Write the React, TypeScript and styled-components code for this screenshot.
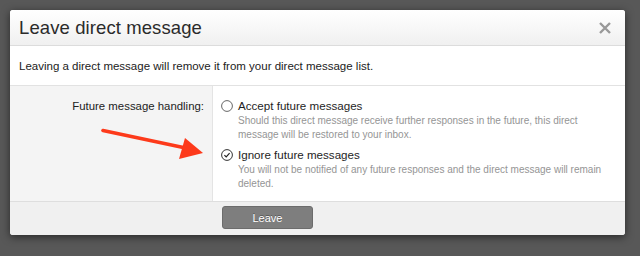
import React from 'react';
import styled, { createGlobalStyle } from 'styled-components';

const GlobalStyle = createGlobalStyle`
  html, body {
    margin: 0;
    padding: 0;
    background: #585858;
  }
  body {
    font-family: "Liberation Sans", Arial, sans-serif;
    color: #333;
  }
`;

const Page = styled.div`
  width: 640px;
  height: 256px;
  padding: 10px 15px 0 10px;
  box-sizing: border-box;
  overflow: hidden;
`;

const Dialog = styled.div`
  width: 615px;
  background: #fff;
  border-radius: 3px;
  overflow: hidden;
  box-shadow: 0 2px 8px rgba(0, 0, 0, 0.55);
`;

const Header = styled.div`
  height: 35px;
  display: flex;
  align-items: center;
  justify-content: space-between;
  padding: 0 13px 0 9px;
  background: linear-gradient(#ffffff, #f0f0f0);
  border-bottom: 1px solid #dcdcdc;
`;

const Title = styled.h1`
  margin: 0;
  font-size: 18.5px;
  font-weight: normal;
  color: #2b2b2b;
  letter-spacing: 0.1px;
`;

const Close = styled.button`
  border: none;
  background: none;
  padding: 0;
  width: 14px;
  height: 14px;
  display: flex;
  cursor: pointer;
`;

const Intro = styled.p`
  margin: 0;
  padding: 13px 9px 12px;
  font-size: 11.5px;
  line-height: 14px;
  color: #222;
  border-bottom: 1px solid #e2e2e2;
`;

const Form = styled.div`
  position: relative;
  display: grid;
  grid-template-columns: 203px 1fr;
`;

const LabelCol = styled.div`
  background: #f4f4f4;
  border-right: 1px solid #e4e4e4;
  padding: 12px 8px 0 0;
  text-align: right;
  font-size: 11.4px;
  line-height: 16px;
  color: #222;
`;

const Options = styled.div`
  display: flex;
  flex-direction: column;
  gap: 5px;
  padding: 12px 10px 10px 8px;
`;

const Option = styled.label`
  display: grid;
  grid-template-columns: 12px 1fr;
  column-gap: 5px;
  cursor: pointer;
`;

const OptionTitle = styled.span`
  font-size: 11.6px;
  line-height: 16px;
  color: #1e1e1e;
`;

const OptionDesc = styled.span`
  grid-column: 2;
  font-size: 10px;
  line-height: 14px;
  color: #959595;
`;

const Mark = styled.span`
  display: flex;
  align-items: center;
  height: 16px;
`;

const Arrow = styled.svg`
  position: absolute;
  left: 0;
  top: 0;
  pointer-events: none;
`;

const Footer = styled.div`
  height: 34px;
  display: flex;
  align-items: flex-start;
  padding: 4px 0 0 212px;
  box-sizing: border-box;
  background: #f0f0f0;
  border-top: 1px solid #dedede;
`;

const LeaveButton = styled.button`
  width: 91px;
  height: 23px;
  border: 1px solid #6c6c6c;
  border-radius: 3px;
  background: #7e7e7e;
  color: #fff;
  font-family: "Liberation Sans", Arial, sans-serif;
  font-size: 11px;
  font-weight: normal;
  text-shadow: 0 -1px 0 rgba(0, 0, 0, 0.35);
  cursor: pointer;
`;

const RadioIcon = ({ checked }: { checked: boolean }) => (
  <svg width="12" height="12" viewBox="0 0 12 12">
    <circle cx="6" cy="6" r="5.4" fill="#fff" stroke={checked ? '#333' : '#666'} strokeWidth="1" />
    {checked && (
      <path d="M3.4 6.1 L5.2 7.9 L8.6 4.2" fill="none" stroke="#222" strokeWidth="1.2" />
    )}
  </svg>
);

const options = [
  {
    title: 'Accept future messages',
    desc: 'Should this direct message receive further responses in the future, this direct message will be restored to your inbox.',
    checked: false,
  },
  {
    title: 'Ignore future messages',
    desc: 'You will not be notified of any future responses and the direct message will remain deleted.',
    checked: true,
  },
];

export default function App() {
  return (
    <Page>
      <GlobalStyle />
      <Dialog>
        <Header>
          <Title>Leave direct message</Title>
          <Close aria-label="Close">
            <svg width="14" height="14" viewBox="0 0 14 14">
              <path d="M2 2 L12 12 M12 2 L2 12" stroke="#999" strokeWidth="2.4" />
            </svg>
          </Close>
        </Header>
        <Intro>Leaving a direct message will remove it from your direct message list.</Intro>
        <Form>
          <LabelCol>Future message handling:</LabelCol>
          <Options>
            {options.map(o => (
              <Option key={o.title}>
                <Mark>
                  <RadioIcon checked={o.checked} />
                </Mark>
                <OptionTitle>{o.title}</OptionTitle>
                <OptionDesc>{o.desc}</OptionDesc>
              </Option>
            ))}
          </Options>
          <Arrow width="210" height="115" viewBox="0 0 210 115">
            <path d="M93 44.5 L178 62.5" stroke="#fd3a1b" strokeWidth="3.5" strokeLinecap="round" />
            <polygon points="175,52 193,67 169,73" fill="#fd3a1b" />
          </Arrow>
        </Form>
        <Footer>
          <LeaveButton>Leave</LeaveButton>
        </Footer>
      </Dialog>
    </Page>
  );
}
